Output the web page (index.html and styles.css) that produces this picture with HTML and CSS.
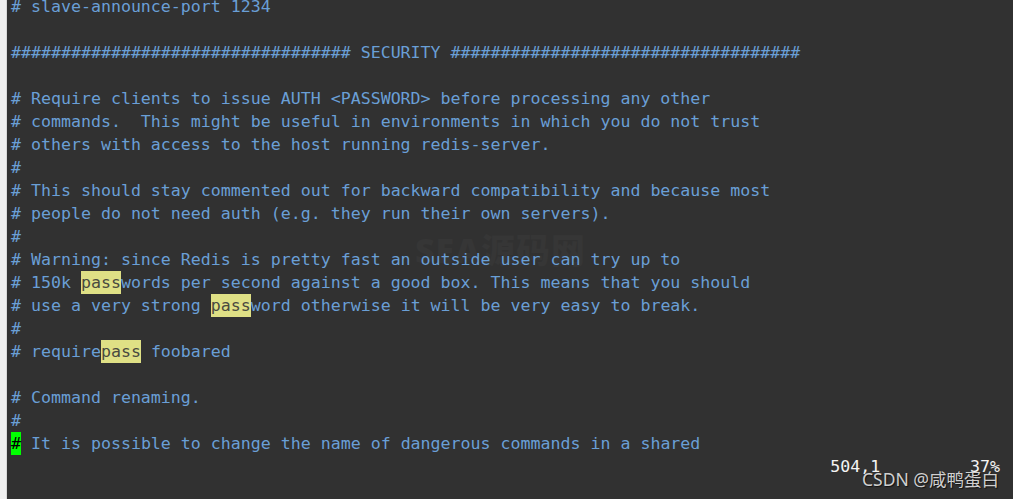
FILE: index.html
```html
<!DOCTYPE html>
<html>
<head>
<meta charset="utf-8">
<link rel="stylesheet" href="styles.css">
</head>
<body>
<div class="window">
  <div class="gutter"></div>
  <div class="term">
    <div class="wm-sea">SEA源码网</div>
    <div class="lines">
      <div class="ln"># slave-announce-port 1234</div>
      <div class="ln"></div>
      <div class="ln">################################## SECURITY ###################################</div>
      <div class="ln"></div>
      <div class="ln"># Require clients to issue AUTH &lt;PASSWORD&gt; before processing any other</div>
      <div class="ln"># commands.  This might be useful in environments in which you do not trust</div>
      <div class="ln"># others with access to the host running redis-server.</div>
      <div class="ln">#</div>
      <div class="ln"># This should stay commented out for backward compatibility and because most</div>
      <div class="ln"># people do not need auth (e.g. they run their own servers).</div>
      <div class="ln">#</div>
      <div class="ln"># Warning: since Redis is pretty fast an outside user can try up to</div>
      <div class="ln"># 150k <span class="hl">pass</span>words per second against a good box. This means that you should</div>
      <div class="ln"># use a very strong <span class="hl">pass</span>word otherwise it will be very easy to break.</div>
      <div class="ln">#</div>
      <div class="ln"># require<span class="hl">pass</span> foobared</div>
      <div class="ln"></div>
      <div class="ln"># Command renaming.</div>
      <div class="ln">#</div>
      <div class="ln"><span class="cursor">#</span> It is possible to change the name of dangerous commands in a shared</div>
      <div class="ln status">                                                                                  504,1         37%</div>
    </div>
    <div class="wm-csdn">CSDN @咸鸭蛋白</div>
  </div>
</div>
</body>
</html>
```

FILE: styles.css
```css
html, body {
  margin: 0;
  padding: 0;
  width: 1013px;
  height: 499px;
  overflow: hidden;
  background: #313131;
}
.window {
  display: flex;
  width: 1013px;
  height: 499px;
}
.gutter {
  width: 6px;
  flex: none;
  background: #efefef;
  border-right: 1px solid #d8d8d8;
}
.term {
  position: relative;
  flex: 1;
  background: #313131;
  overflow: hidden;
  padding-left: 4px;
}
.lines {
  position: relative;
  z-index: 1;
  margin-top: -5px;
  font-family: "DejaVu Sans Mono", "Liberation Mono", monospace;
  font-size: 16.6px;
  color: #6a9fd6;
}
.ln {
  height: 23px;
  line-height: 23px;
  white-space: pre;
}
.hl {
  background: #dfe085;
  color: #4a4a40;
  display: inline-block;
  height: 23px;
}
.cursor {
  background: #00ff00;
  color: #000;
  display: inline-block;
  height: 23px;
}
.status {
  color: #f4f4f4;
}
.wm-sea {
  position: absolute;
  z-index: 0;
  left: 408px;
  top: 224px;
  font-family: "Noto Sans", "Noto Sans CJK SC", sans-serif;
  font-weight: 900;
  font-size: 34px;
  color: #363636;
  letter-spacing: 1px;
  pointer-events: none;
}
.wm-csdn {
  position: absolute;
  z-index: 2;
  left: 855px;
  top: 466px;
  font-family: "Noto Sans", "Noto Sans CJK SC", sans-serif;
  font-size: 17.5px;
  color: #d0d0d0;
  text-shadow: 1px 1px 1px #111;
  white-space: nowrap;
}
```
